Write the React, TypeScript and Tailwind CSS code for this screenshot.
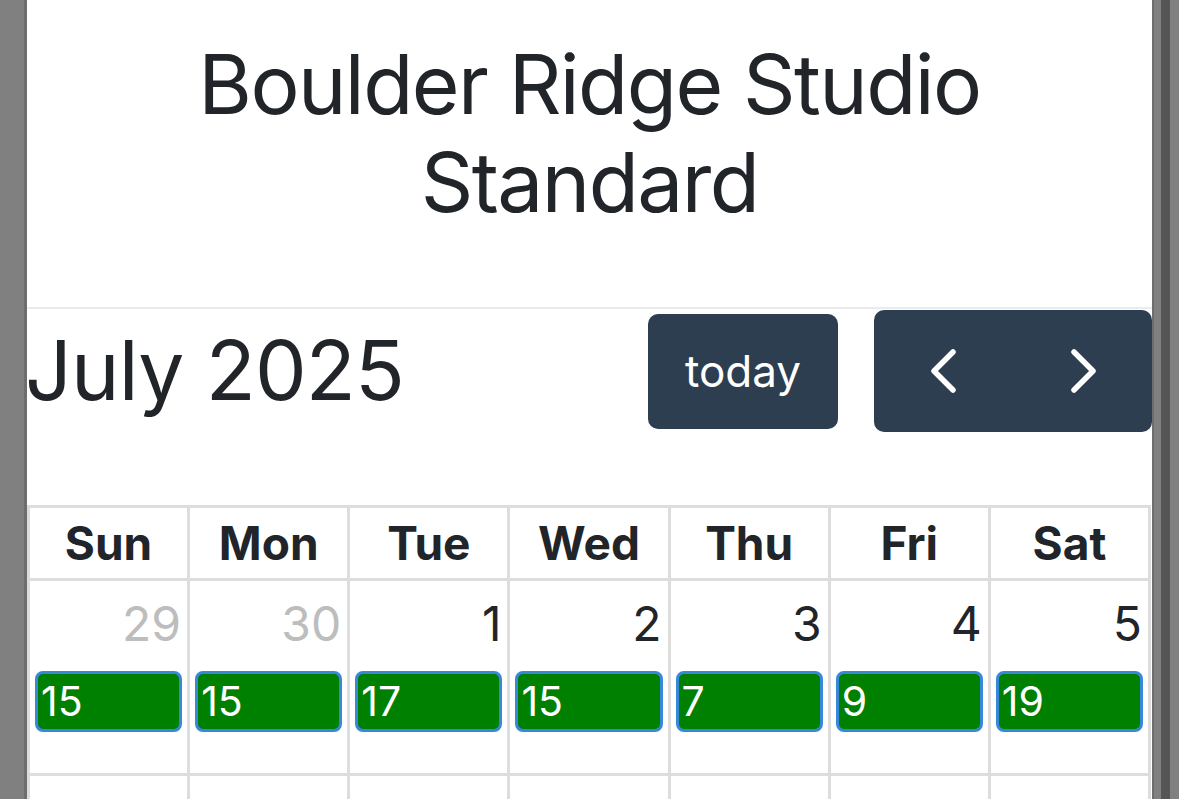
const font = { fontFamily: 'Inter, "Noto Sans", sans-serif' };

interface Day {
  num?: number;
  other?: boolean;
  count?: number;
}

const weeks: Day[][] = [
  [
    { num: 29, other: true, count: 15 },
    { num: 30, other: true, count: 15 },
    { num: 1, count: 17 },
    { num: 2, count: 15 },
    { num: 3, count: 7 },
    { num: 4, count: 9 },
    { num: 5, count: 19 },
  ],
  // next week, only its top edge is in view
  [{}, {}, {}, {}, {}, {}, {}],
];

const dayNames = ['Sun', 'Mon', 'Tue', 'Wed', 'Thu', 'Fri', 'Sat'];

function Chevron({ dir }: { dir: 'left' | 'right' }) {
  const points = dir === 'left' ? '24,4 5,23 24,42' : '6,4 25,23 6,42';
  return (
    <svg width="30" height="46" viewBox="0 0 30 46" fill="none">
      <polyline
        points={points}
        stroke="white"
        strokeWidth="5.5"
        strokeLinecap="round"
        strokeLinejoin="round"
      />
    </svg>
  );
}

export default function App() {
  return (
    <div className="flex h-[799px] w-[1179px] overflow-hidden bg-[#808080]" style={font}>
      {/* left gutter */}
      <div className="w-[24px] shrink-0 bg-[#808080]" />
      <div className="w-[3px] shrink-0 bg-[#6e6e6e]" />

      {/* page */}
      <div className="flex-1 bg-white text-[#212529]">
        <h1 className="pt-[36px] pb-[75px] text-center text-[82px] font-normal leading-[98px] tracking-[-1.6px]">
          Boulder Ridge Studio
          <br />
          Standard
        </h1>
        <div className="h-[2px] bg-[#e9ecef]" />

        {/* toolbar */}
        <div className="flex h-[124px] items-center justify-between">
          <h2 className="-ml-[2px] text-[82px] font-normal leading-none tracking-[-0.8px]">July 2025</h2>
          <div className="flex items-center gap-[36px]">
            <button className="flex h-[115px] w-[190px] items-center justify-center rounded-[10px] bg-[#2c3e50] text-[44px] text-white">
              today
            </button>
            <div className="flex h-[122px] w-[278px] overflow-hidden rounded-[10px] bg-[#2c3e50]">
              <button className="flex flex-1 items-center justify-center">
                <Chevron dir="left" />
              </button>
              <button className="flex flex-1 items-center justify-center">
                <Chevron dir="right" />
              </button>
            </div>
          </div>
        </div>

        {/* calendar */}
        <table className="mt-[72px] w-[1124px] table-fixed border-collapse">
          <thead>
            <tr>
              {dayNames.map((d) => (
                <th
                  key={d}
                  className="h-[73px] border-[3px] border-[#dddddd] p-0 text-center text-[46px] font-bold leading-[70px]"
                >
                  {d}
                </th>
              ))}
            </tr>
          </thead>
          <tbody>
            {weeks.map((week, wi) => (
              <tr key={wi}>
                {week.map((day, di) => (
                  <td key={di} className="h-[195px] border-[3px] border-[#dddddd] p-0 align-top">
                    {day.num !== undefined && (
                      <div
                        className={`pt-[14px] pr-[6px] text-right text-[48px] leading-[58px] ${
                          day.other ? 'text-[#bdbdbd]' : 'text-[#212529]'
                        }`}
                      >
                        {day.num}
                      </div>
                    )}
                    {day.count !== undefined && (
                      <div className="mx-[5px] mt-[18px] h-[61px] rounded-[8px] border-[3px] border-[#3788d8] bg-[#008000] pl-[3px] text-[41px] leading-[55px] text-white">
                        {day.count}
                      </div>
                    )}
                  </td>
                ))}
              </tr>
            ))}
          </tbody>
        </table>
      </div>

      {/* right gutter */}
      <div className="w-[2px] shrink-0 bg-[#6e6e6e]" />
      <div className="w-[7px] shrink-0 bg-[#808080]" />
      <div className="w-[9px] shrink-0 bg-[#555555]" />
      <div className="w-[9px] shrink-0 bg-[#808080]" />
    </div>
  );
}
